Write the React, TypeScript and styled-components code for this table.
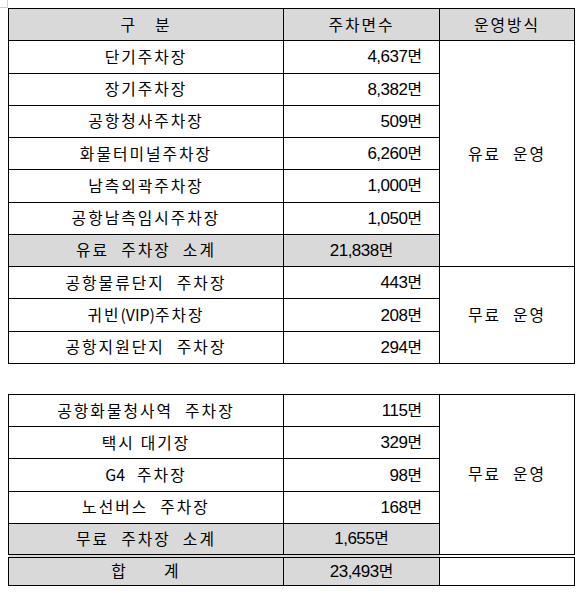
import React from "react";
import styled, { createGlobalStyle } from "styled-components";

const GlobalStyle = createGlobalStyle`
  html, body { margin: 0; padding: 0; background: #ffffff; }
  body {
    font-family: "Noto Sans CJK KR", "Noto Sans", sans-serif;
    color: #000000;
  }
`;

const Page = styled.div`
  position: relative;
  padding: 8px 0 0 8px;
  display: flex;
  flex-direction: column;
  gap: 30px;
`;

const CornerMark = styled.span`
  position: absolute;
  left: 0;
  top: 0;
  width: 7px;
  height: 7px;
  border-right: 1px solid #d0d0d0;
  border-bottom: 1px solid #d0d0d0;
`;

const Table = styled.table`
  width: 566px;
  border-collapse: collapse;
  table-layout: fixed;
  border: 1px solid #000;
`;

const Row = styled.tr<{ $double?: boolean }>`
  height: ${(p) => (p.$double ? "29.5px" : "32.27px")};
  ${(p) => (p.$double ? "border-top: 4px double #000;" : "")}
`;

const Cell = styled.td<{ $shade?: boolean; $align?: "left" | "center" | "right" }>`
  border: 1px solid #000;
  padding: 0 ${(p) => (p.$align === "right" ? "17px" : "0")} 0 0;
  background: ${(p) => (p.$shade ? "#d9d9d9" : "#ffffff")};
  text-align: ${(p) => p.$align || "center"};
  vertical-align: middle;
  font-size: 15.8px;
  line-height: 18px;
  letter-spacing: 2px;
  word-spacing: 0.5px;
  white-space: pre;
`;

const Num = styled.span`
  font-family: "Liberation Sans", Arial, sans-serif;
  letter-spacing: -0.5px;
  font-size: 17px;
`;

const Latin = styled.span`
  letter-spacing: 0;
`;

const Unit = styled.span`
  letter-spacing: 0;
`;

type Item = { name: React.ReactNode; key: string; count: string };

const paid: Item[] = [
  { key: "a", name: "단기주차장", count: "4,637" },
  { key: "b", name: "장기주차장", count: "8,382" },
  { key: "c", name: "공항청사주차장", count: "509" },
  { key: "d", name: "화물터미널주차장", count: "6,260" },
  { key: "e", name: "남측외곽주차장", count: "1,000" },
  { key: "f", name: "공항남측임시주차장", count: "1,050" },
];

const free1: Item[] = [
  { key: "g", name: "공항물류단지  주차장", count: "443" },
  {
    key: "h",
    name: (
      <>
        귀빈<Latin>(VIP)</Latin>주차장
      </>
    ),
    count: "208",
  },
  { key: "i", name: "공항지원단지  주차장", count: "294" },
];

const free2: Item[] = [
  { key: "j", name: "공항화물청사역  주차장", count: "115" },
  { key: "k", name: "택시 대기장", count: "329" },
  {
    key: "l",
    name: (
      <>
        <Latin>G4</Latin>
        {"  주차장"}
      </>
    ),
    count: "98",
  },
  { key: "m", name: "노선버스  주차장", count: "168" },
];

const Count: React.FC<{ v: string }> = ({ v }) => (
  <>
    <Num>{v}</Num>
    <Unit>면</Unit>
  </>
);

const Cols = () => (
  <colgroup>
    <col style={{ width: 275 }} />
    <col style={{ width: 156 }} />
    <col style={{ width: 135 }} />
  </colgroup>
);

export default function App() {
  return (
    <>
      <GlobalStyle />
      <Page>
        <CornerMark />
        <Table>
          <Cols />
          <tbody>
            <Row>
              <Cell $shade>{"구   분"}</Cell>
              <Cell $shade>주차면수</Cell>
              <Cell $shade>운영방식</Cell>
            </Row>
            {paid.map((it, i) => (
              <Row key={it.key}>
                <Cell>{it.name}</Cell>
                <Cell $align="right">
                  <Count v={it.count} />
                </Cell>
                {i === 0 && <Cell rowSpan={7}>{"유료  운영"}</Cell>}
              </Row>
            ))}
            <Row>
              <Cell $shade>{"유료  주차장  소계"}</Cell>
              <Cell $shade>
                <Count v="21,838" />
              </Cell>
            </Row>
            {free1.map((it, i) => (
              <Row key={it.key}>
                <Cell>{it.name}</Cell>
                <Cell $align="right">
                  <Count v={it.count} />
                </Cell>
                {i === 0 && <Cell rowSpan={3}>{"무료  운영"}</Cell>}
              </Row>
            ))}
          </tbody>
        </Table>
        <Table>
          <Cols />
          <tbody>
            {free2.map((it, i) => (
              <Row key={it.key}>
                <Cell>{it.name}</Cell>
                <Cell $align="right">
                  <Count v={it.count} />
                </Cell>
                {i === 0 && <Cell rowSpan={5}>{"무료  운영"}</Cell>}
              </Row>
            ))}
            <Row>
              <Cell $shade>{"무료  주차장  소계"}</Cell>
              <Cell $shade>
                <Count v="1,655" />
              </Cell>
            </Row>
            <Row $double>
              <Cell $shade>{"합      계"}</Cell>
              <Cell $shade>
                <Count v="23,493" />
              </Cell>
              <Cell />
            </Row>
          </tbody>
        </Table>
      </Page>
    </>
  );
}
